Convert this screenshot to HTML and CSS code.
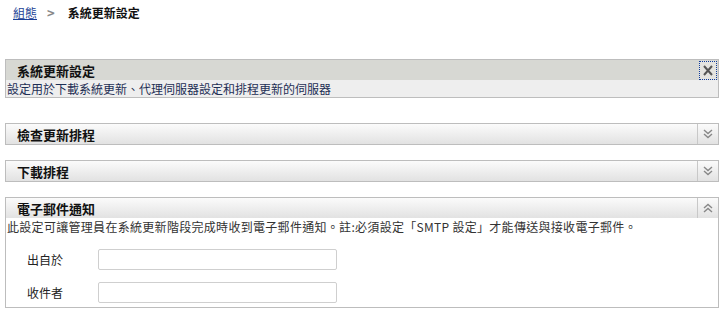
FILE: index.html
```html
<html>
<head>
<title>系統更新設定</title>
<link rel="stylesheet" href="styles.css">
</head>
<body>

<div class="crumbs">
<a href="#">組態</a>
<span class="sep">&gt;</span>
<b>系統更新設定</b>
</div>

<div class="panel first">
<div class="head solid">
<span class="title">系統更新設定</span>
<span class="close"><svg width="14" height="13" viewBox="0 0 14 13"><path d="M3 2 L11 11 M11 2 L3 11" stroke="#555" stroke-width="2"/></svg></span>
</div>
<div class="descr gray">設定用於下載系統更新、代理伺服器設定和排程更新的伺服器</div>
</div>

<div class="panel">
<div class="head">
<span class="title">檢查更新排程</span>
<span class="tog"><svg width="10" height="10" viewBox="0 0 10 10"><path d="M1 1 L5 4.5 L9 1 M1 5 L5 8.5 L9 5" stroke="#888" stroke-width="1.4" fill="none"/></svg></span>
</div>
</div>

<div class="panel">
<div class="head">
<span class="title">下載排程</span>
<span class="tog"><svg width="10" height="10" viewBox="0 0 10 10"><path d="M1 1 L5 4.5 L9 1 M1 5 L5 8.5 L9 5" stroke="#888" stroke-width="1.4" fill="none"/></svg></span>
</div>
</div>

<div class="panel last">
<div class="head">
<span class="title">電子郵件通知</span>
<span class="tog"><svg width="10" height="10" viewBox="0 0 10 10"><path d="M1 5 L5 1.5 L9 5 M1 9 L5 5.5 L9 9" stroke="#888" stroke-width="1.4" fill="none"/></svg></span>
</div>
<div class="descr">此設定可讓管理員在系統更新階段完成時收到電子郵件通知。註:必須設定「SMTP 設定」才能傳送與接收電子郵件。</div>
<div class="form">
<div class="row"><label>出自於</label><input type="text"></div>
<div class="row"><label>收件者</label><input type="text"></div>
</div>
</div>

</body>
</html>
```

FILE: styles.css
```css
body { margin:0; padding:6px 4px 0 5px; background-color:#FFFFFF; font-family:"Noto Sans CJK TC", "Liberation Sans", sans-serif; font-size:12px; color:#222; }
.crumbs { padding-left:8px; height:14px; line-height:14px; font-size:12px; display:flex; align-items:center; }
.crumbs a { color:#1C3F95; text-decoration:underline; }
.crumbs .sep { color:#888; font-weight:bold; font-size:13px; margin:0 13px 0 10px; }
.crumbs b { color:#111; }
.panel { border:1px solid #BDBDBD; margin-bottom:15px; width:712px; }
.panel.first { margin-top:39px; margin-bottom:25px; }
.panel.last { margin-bottom:0; }
.head { display:flex; align-items:center; height:20px; background:linear-gradient(#FBFBFB, #E2E2E2); }
.head.solid { background:#D7D8D3; }
.title { flex:1; padding-left:11px; font-weight:bold; font-size:13px; color:#111; }
.close { width:16px; height:17px; border:1px dotted #103C9A; margin-right:1px; display:flex; align-items:center; justify-content:center; background:#E4E4E0; }
.tog { width:20px; height:20px; border-left:1px solid #C8C8C8; display:flex; align-items:center; justify-content:center; }
.descr { padding:0 0 0 1px; height:17px; line-height:17px; font-size:12px; color:#333; letter-spacing:0.3px; }
.descr.gray { background:#EEEEEE; color:#1E2F55; letter-spacing:0; }
.form { padding:14px 0 4px 0; }
.row { display:flex; align-items:center; height:21px; margin-bottom:12px; }
.row:last-child { margin-bottom:0; }
.row label { width:92px; padding-left:21px; box-sizing:border-box; color:#222; }
.row input { width:239px; height:21px; border:1px solid #CFCFCF; border-radius:2px; padding:0; }
```
